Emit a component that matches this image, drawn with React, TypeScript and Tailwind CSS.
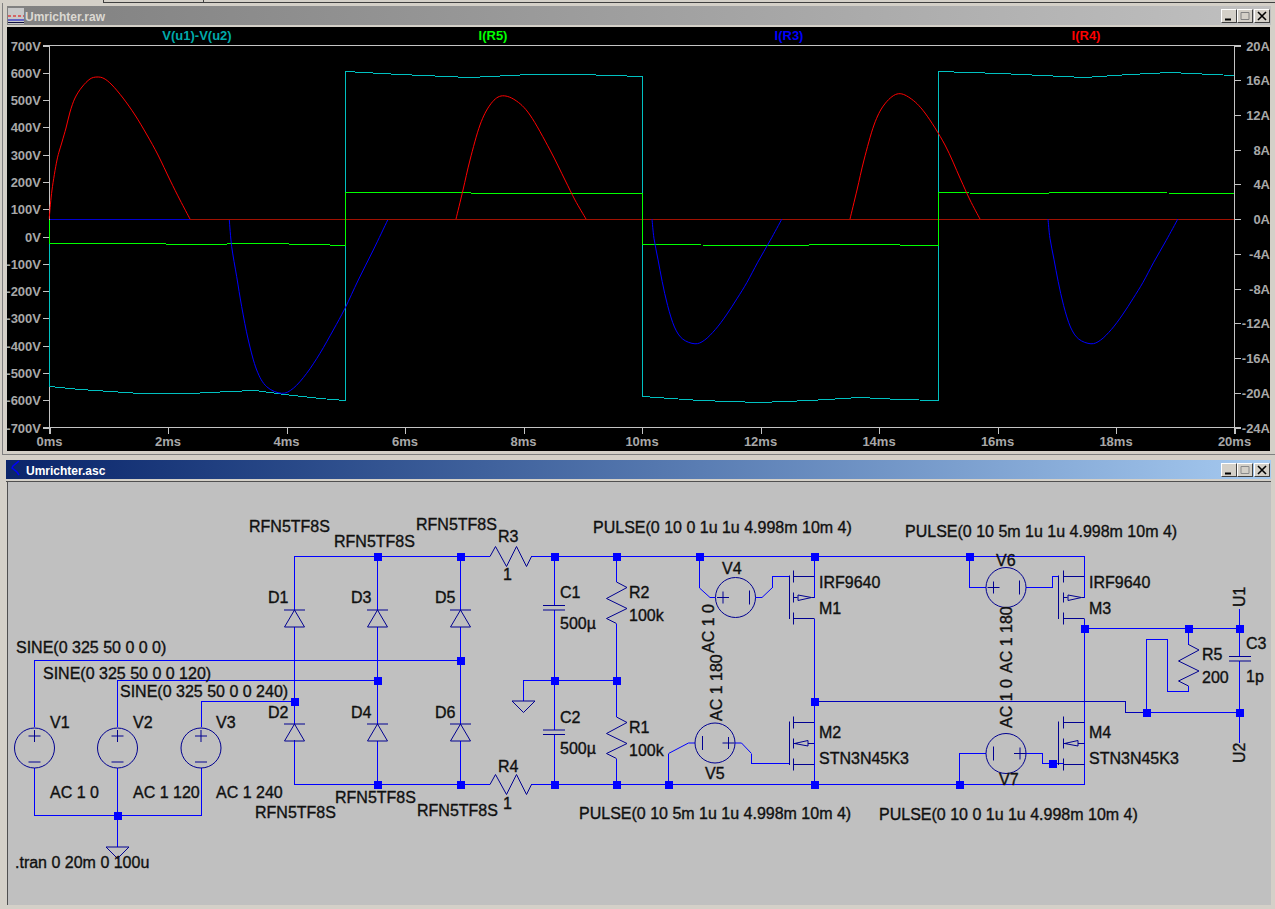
import React from "react";

type P = [number, number];

const F = "'Liberation Sans', Arial, sans-serif";
const WIRE = "#0000ff";
const SYM = "#000090";

function curve(pts: P[]): string {
  let d = `M${pts[0][0]} ${pts[0][1]}`;
  for (let i = 0; i < pts.length - 1; i++) {
    const p0 = pts[Math.max(0, i - 1)];
    const p1 = pts[i];
    const p2 = pts[i + 1];
    const p3 = pts[Math.min(pts.length - 1, i + 2)];
    const c1x = p1[0] + (p2[0] - p0[0]) / 6;
    const c1y = p1[1] + (p2[1] - p0[1]) / 6;
    const c2x = p2[0] - (p3[0] - p1[0]) / 6;
    const c2y = p2[1] - (p3[1] - p1[1]) / 6;
    d += ` C${c1x} ${c1y} ${c2x} ${c2y} ${p2[0]} ${p2[1]}`;
  }
  return d;
}

const leftLabels = ["700V", "600V", "500V", "400V", "300V", "200V", "100V", "0V", "-100V", "-200V", "-300V", "-400V", "-500V", "-600V", "-700V"];
const rightLabels = ["20A", "16A", "12A", "8A", "4A", "0A", "-4A", "-8A", "-12A", "-16A", "-20A", "-24A"];
const timeLabels = ["0ms", "2ms", "4ms", "6ms", "8ms", "10ms", "12ms", "14ms", "16ms", "18ms", "20ms"];

const teal: P[] = [
  [49.5, 243.5], [49.5, 386.5], [80, 389.5], [110, 391.5], [140, 393.5], [190, 393.5], [230, 391.5], [255, 390.5], [285, 394.5], [320, 398.5], [345.5, 400.5], [345.5, 71.5], [400, 74.5], [470, 77.5], [530, 74.5], [580, 74.5], [642.5, 76.5], [642.5, 396.5], [700, 400.5], [760, 402.5], [810, 400.5], [860, 397.5], [900, 399.5], [938.5, 400.5], [938.5, 71.5], [1000, 73.5], [1085, 77.5], [1130, 74.5], [1170, 72.5], [1234, 75.5],
];

const green: P[] = [
  [49.5, 219.5], [49.5, 243.5], [140, 243.5], [192, 244.5], [262, 243.5], [315, 244.5], [345.5, 245.5], [345.5, 192.5], [420, 192.5], [520, 193.5], [642.5, 193.5], [642.5, 244.5], [760, 245.5], [860, 244.5], [938.5, 245.5], [938.5, 192.5], [1000, 193.5], [1100, 192.5], [1234, 193.5],
];

const red: P[][] = [
  [[49.5, 219], [49.5, 215], [52, 190], [57, 160], [62, 142], [66, 128], [70, 112], [75, 98], [82, 87], [90, 79], [97, 77], [104, 78.5], [112, 85], [123, 98], [135, 115], [147, 135], [158, 155], [170, 180], [180, 200], [190, 219]],
  [[456, 219], [463, 190], [470, 160], [480, 125], [490, 105], [501, 96], [515, 100], [530, 115], [550, 150], [565, 180], [575, 200], [586, 219]],
  [[850, 219], [857, 190], [864, 160], [874, 125], [884, 105], [897, 94], [910, 98], [925, 113], [945, 145], [960, 178], [970, 200], [980, 219]],
];

const blueBase: P[] = [
  [229.3, 220], [231.7, 246.7], [236.7, 276.7], [241.7, 306.7], [248.3, 340], [256.7, 370], [266.7, 386.7], [281.7, 393.3], [293.3, 388.3], [306.7, 373.3], [320, 353.3], [333.3, 330], [345, 308.3], [358.3, 280], [373.3, 250], [387.7, 220],
];
const shrink = (x0: number): P[] => blueBase.map(([x, y]) => [x0 + (x - 229.3) * 0.82, 219 + (y - 220) * 0.72]);
const blue: P[][] = [blueBase, shrink(652), shrink(1048)];

function Plot() {
  const ax = "#c4c4c4";
  const tx = "#a8a8a8";
  const L = 49.5;
  const R = 1234.5;
  const T = 45.5;
  const B = 427.5;
  return (
    <svg viewBox="7 27 1263 424" className="block w-full h-full" style={{ fontFamily: F }}>
      <rect x="7" y="27" width="1263" height="424" fill="#000000" />
      <g stroke={ax} strokeWidth="1" shapeRendering="crispEdges" fill="none">
        <path d={`M43 ${T}H1241M43 ${B}H1241M${L} ${T}V434M${R} ${T}V434`} />
        {leftLabels.map((_, i) => (
          <path key={i} d={`M43 ${Math.round(T + (i * (B - T)) / 14) + 0.5}H${L}`} />
        ))}
        {rightLabels.map((_, i) => (
          <path key={i} d={`M${R} ${Math.round(T + (i * (B - T)) / 11) + 0.5}H1241`} />
        ))}
        {timeLabels.map((_, i) => (
          <path key={i} d={`M${Math.round(L + (i * (R - L)) / 10) + 0.5} ${B}V434`} />
        ))}
      </g>
      <g fontSize="13" fontWeight="700" fill={tx}>
        {leftLabels.map((t, i) => (
          <text key={t} x="41" y={T + (i * (B - T)) / 14 + 5} textAnchor="end">{t}</text>
        ))}
        {rightLabels.map((t, i) => (
          <text key={t} x="1270" y={T + (i * (B - T)) / 11 + 5} textAnchor="end">{t}</text>
        ))}
        {timeLabels.map((t, i) => (
          <text key={t} x={L + (i * (R - L)) / 10} y="446" textAnchor="middle">{t}</text>
        ))}
      </g>
      <g fontSize="13" fontWeight="700" textAnchor="middle">
        <text x="197" y="40" fill="#00aaaa">V(u1)-V(u2)</text>
        <text x="493" y="40" fill="#00ff00">I(R5)</text>
        <text x="789" y="40" fill="#0000ff">I(R3)</text>
        <text x="1086" y="40" fill="#ff0000">I(R4)</text>
      </g>
      <g fill="none" strokeWidth="1">
        <path d="M49.5 219.5H190" stroke="#0000d0" shapeRendering="crispEdges" />
        <path d="M190 219.5H1234" stroke="#a01000" shapeRendering="crispEdges" />
        <polyline points={teal.map((p) => p.join(",")).join(" ")} stroke="#00c0c0" shapeRendering="crispEdges" />
        <polyline points={green.map((p) => p.join(",")).join(" ")} stroke="#00ff00" shapeRendering="crispEdges" />
        {red.map((s, i) => (
          <path key={i} d={curve(s)} stroke="#ff0000" />
        ))}
        {blue.map((s, i) => (
          <path key={i} d={curve(s)} stroke="#0000ff" />
        ))}
      </g>
    </svg>
  );
}

const Wire = ({ d, dim }: { d: string; dim?: boolean }) => <path d={d} fill="none" stroke={dim ? "#0000b8" : WIRE} strokeWidth="1" shapeRendering="crispEdges" />;
const Diag = ({ d }: { d: string }) => <path d={d} fill="none" stroke={WIRE} strokeWidth="1" />;
const Sym = ({ d }: { d: string }) => <path d={d} fill="none" stroke={SYM} strokeWidth="1" />;
const Node = ({ x, y }: { x: number; y: number }) => <rect x={x - 3.5} y={y - 3.5} width="8" height="8" fill={WIRE} shapeRendering="crispEdges" />;
const T = ({ x, y, children, rot }: { x: number; y: number; children: React.ReactNode; rot?: boolean }) => (
  <text x={x} y={y} transform={rot ? `rotate(-90 ${x} ${y})` : undefined}>{children}</text>
);

const Diode = ({ x, y }: { x: number; y: number }) => <Sym d={`M${x - 10.5} ${y}H${x + 10.5}M${x} ${y}L${x + 10} ${y + 17}H${x - 10}Z`} />;

const Circle = ({ x, y }: { x: number; y: number }) => <circle cx={x} cy={y} r="20" fill="none" stroke={SYM} strokeWidth="1" />;

const Vert = ({ x, y }: { x: number; y: number }) => (
  <g>
    <Circle x={x} y={y} />
    <Sym d={`M${x - 6} ${y - 12}H${x + 6}M${x} ${y - 18}V${y - 6}M${x - 6} ${y + 14}H${x + 6}`} />
  </g>
);

const Horiz = ({ x, y, plus, bar }: { x: number; y: number; plus: number; bar: number }) => (
  <g>
    <Circle x={x} y={y} />
    <Sym d={`M${plus - 6} ${y}H${plus + 6}M${plus} ${y - 6}V${y + 6}M${bar} ${y - 7}V${y + 7}`} />
  </g>
);

const Res = ({ x, y }: { x: number; y: number }) => (
  <Sym d={`M${x} ${y}L${x + 10.5} ${y + 5.5}L${x - 10} ${y + 16.5}L${x + 10.5} ${y + 26.5}L${x - 10} ${y + 36.5}L${x} ${y + 41.5}`} />
);

const HRes = ({ x, y }: { x: number; y: number }) => (
  <Sym d={`M${x} ${y}L${x + 5.5} ${y - 10}L${x + 16.5} ${y + 10}L${x + 26.5} ${y - 10}L${x + 36.5} ${y + 10}L${x + 41.5} ${y}`} />
);

const Cap = ({ x, y }: { x: number; y: number }) => <Sym d={`M${x - 11} ${y}H${x + 11}M${x - 11} ${y + 4.5}H${x + 11}`} />;

const Gnd = ({ x, y }: { x: number; y: number }) => <Sym d={`M${x - 11.5} ${y}H${x + 11.5}L${x} ${y + 11.5}Z`} />;

const Fet = ({ gx, cx, dx, top, tip }: { gx: number; cx: number; dx: number; top: number; tip: "p" | "n" }) => {
  const y1 = top + 6;
  const y2 = top + 27;
  const y3 = top + 48;
  return (
    <g>
      <Sym d={`M${gx} ${top + 5}V${top + 48.5}M${cx} ${top}V${top + 12}M${cx} ${top + 22}V${top + 32}M${cx} ${top + 42}V${top + 54}M${cx} ${y1}H${dx}M${cx} ${y3}H${dx}M${cx} ${y2}H${cx + 4}`} />
      {tip === "p" ? (
        <Sym d={`M${cx + 4.5} ${y2 - 2.5}V${y2 + 3}L${cx + 18} ${y2}ZM${cx + 18} ${y2}H${dx}`} />
      ) : (
        <Sym d={`M${cx + 1} ${y2}L${cx + 14.5} ${y2 - 3}V${y2 + 2.5}ZM${cx + 14.5} ${y2}H${dx}`} />
      )}
    </g>
  );
};

function Schematic() {
  const nodes: P[] = [
    [377.5, 556.5], [460.5, 556.5], [554.5, 556.5], [616.5, 556.5], [699.5, 556.5], [814.5, 556.5], [969.5, 556.5],
    [460.5, 660.5], [377.5, 680.5], [294.5, 701.5], [554.5, 680.5], [616.5, 680.5],
    [377.5, 784.5], [460.5, 784.5], [554.5, 784.5], [616.5, 784.5], [668.5, 784.5], [814.5, 784.5], [959.5, 784.5],
    [814.5, 701.5], [1084.5, 628.5], [1188.5, 628.5], [1239.5, 628.5], [1146.5, 712.5], [1239.5, 712.5], [1052.5, 763.5], [117.5, 815.5],
  ];
  return (
    <svg viewBox="8 482 1263 423" className="block w-full h-full" style={{ fontFamily: F }}>
      <rect x="8" y="482" width="1263" height="423" fill="#c0c0c0" />
      {/* main rails */}
      <Wire d="M294.5 610V556.5H490M531 556.5H1084.5V576.5" />
      <Wire d="M294.5 740V784.5H490M531 784.5H1084.5V763.5" />
      {/* bridge */}
      <Wire d="M294.5 627V724M377.5 556.5V610M377.5 627V724M377.5 741V784.5M460.5 556.5V610M460.5 627V724M460.5 741V784.5" />
      <Wire d="M34.5 727V660.5H460.5M117.5 727V680.5H377.5M201.5 727V701.5H294.5" />
      <Wire d="M34.5 768V815.5H201.5V768M117.5 768V847" />
      <Diode x={294.5} y={610} />
      <Diode x={377.5} y={610} />
      <Diode x={460.5} y={610} />
      <Diode x={294.5} y={724} />
      <Diode x={377.5} y={724} />
      <Diode x={460.5} y={724} />
      <Vert x={34.5} y={748} />
      <Vert x={117.5} y={748} />
      <Vert x={201} y={748} />
      <Gnd x={117.5} y={847} />
      <HRes x={490} y={556.5} />
      <HRes x={490} y={784.5} />
      {/* caps + R1 R2 */}
      <Wire d="M554.5 556.5V605M554.5 610V730M554.5 735V784.5M523.5 701V680.5H616.5M616.5 556.5V582M616.5 624V717M616.5 759V784.5" />
      <Cap x={554} y={605.5} />
      <Cap x={554} y={730} />
      <Gnd x={523.5} y={701} />
      <Res x={616.5} y={582} />
      <Res x={616.5} y={717} />
      {/* V4 + M1 */}
      <Wire d="M699.5 556.5V588" />
      <Diag d="M699.5 588L710 597.5H715" />
      <Horiz x={735.5} y={597.5} plus={723} bar={749.5} />
      <Diag d="M755.5 597.5H762L772.5 587.5" />
      <Wire d="M772.5 587.5V576.5H789.5" />
      <Fet gx={789.5} cx={793.5} dx={814.5} top={570.5} tip="p" />
      <Wire d="M814.5 556.5V597.5M814.5 618.5V722" />
      {/* V5 + M2 */}
      <Wire d="M668.5 784.5V753.5" />
      <Diag d="M668.5 753.5L688.5 743H695" />
      <Horiz x={715} y={743} plus={728.5} bar={702.5} />
      <Diag d="M735 743H741.5L751.5 753.5" />
      <Wire d="M751.5 753.5V763.5H789.5" />
      <Fet gx={789.5} cx={793.5} dx={814.5} top={716.5} tip="n" />
      <Wire d="M814.5 722V763M814.5 763V784.5" />
      {/* V6 + M3 */}
      <Wire d="M969.5 556.5V587.5H986M1026 587.5H1052.5V576.5H1058.5" />
      <Horiz x={1006} y={587.5} plus={993.5} bar={1019.5} />
      <Fet gx={1058.5} cx={1063.5} dx={1084.5} top={570.5} tip="p" />
      <Wire d="M1084.5 556.5V597.5M1084.5 618.5V784.5" />
      {/* V7 + M4 */}
      <Wire d="M959.5 784.5V753.5H986M1026 753.5H1042.5V763.5H1063.5" />
      <Horiz x={1006} y={753.5} plus={1020} bar={993.5} />
      <Fet gx={1058.5} cx={1063.5} dx={1084.5} top={716.5} tip="n" />
      {/* output */}
      <Wire dim d="M814.5 701.5H1125.5V712.5H1146.5" />
      <Wire d="M1146.5 712.5H1239.5M1084.5 628.5H1239.5V656.5M1239.5 661V743M1239.5 628.5V609" />
      <Wire d="M1188.5 628.5V644.5M1188.5 686V691.5H1167.5V639.5H1146.5V712.5" />
      <Res x={1188.5} y={644.5} />
      <Cap x={1240} y={656.5} />
      {nodes.map(([x, y]) => (
        <Node key={`${x}-${y}`} x={x} y={y} />
      ))}
      <g fontSize="16" fill="#101010" stroke="#101010" strokeWidth="0.35">
        <T x={249} y={532}>RFN5TF8S</T>
        <T x={334} y={547}>RFN5TF8S</T>
        <T x={416} y={530}>RFN5TF8S</T>
        <T x={498} y={542}>R3</T>
        <T x={503} y={580}>1</T>
        <T x={268} y={603}>D1</T>
        <T x={351} y={603}>D3</T>
        <T x={435} y={603}>D5</T>
        <T x={268} y={718}>D2</T>
        <T x={351} y={718}>D4</T>
        <T x={435} y={718}>D6</T>
        <T x={498} y={772}>R4</T>
        <T x={503} y={809}>1</T>
        <T x={335} y={803}>RFN5TF8S</T>
        <T x={417} y={816}>RFN5TF8S</T>
        <T x={255} y={818}>RFN5TF8S</T>
        <T x={16} y={653}>SINE(0 325 50 0 0 0)</T>
        <T x={43} y={679}>SINE(0 325 50 0 0 120)</T>
        <T x={120} y={697}>SINE(0 325 50 0 0 240)</T>
        <T x={50} y={728}>V1</T>
        <T x={133} y={728}>V2</T>
        <T x={216} y={728}>V3</T>
        <T x={50} y={798}>AC 1 0</T>
        <T x={133} y={798}>AC 1 120</T>
        <T x={216} y={798}>AC 1 240</T>
        <T x={15} y={868}>.tran 0 20m 0 100u</T>
        <T x={593} y={533}>PULSE(0 10 0 1u 1u 4.998m 10m 4)</T>
        <T x={905} y={537}>PULSE(0 10 5m 1u 1u 4.998m 10m 4)</T>
        <T x={579} y={819}>PULSE(0 10 5m 1u 1u 4.998m 10m 4)</T>
        <T x={879} y={820}>PULSE(0 10 0 1u 1u 4.998m 10m 4)</T>
        <T x={560} y={598}>C1</T>
        <T x={560} y={629}>500µ</T>
        <T x={560} y={723}>C2</T>
        <T x={560} y={754}>500µ</T>
        <T x={629} y={598}>R2</T>
        <T x={629} y={621}>100k</T>
        <T x={629} y={733}>R1</T>
        <T x={629} y={756}>100k</T>
        <T x={722} y={574}>V4</T>
        <T x={705} y={779}>V5</T>
        <T x={996} y={566}>V6</T>
        <T x={999} y={785}>V7</T>
        <T x={819} y={588}>IRF9640</T>
        <T x={819} y={614}>M1</T>
        <T x={819} y={738}>M2</T>
        <T x={819} y={764}>STN3N45K3</T>
        <T x={1089} y={588}>IRF9640</T>
        <T x={1089} y={614}>M3</T>
        <T x={1089} y={738}>M4</T>
        <T x={1089} y={764}>STN3N45K3</T>
        <T x={1202} y={660}>R5</T>
        <T x={1202} y={683}>200</T>
        <T x={1246} y={649}>C3</T>
        <T x={1246} y={682}>1p</T>
        <T x={714} y={653} rot>AC 1 0</T>
        <T x={722} y={721} rot>AC 1 180</T>
        <T x={1012} y={673} rot>AC 1 180</T>
        <T x={1012} y={728} rot>AC 1 0</T>
        <T x={1245} y={607} rot>U1</T>
        <T x={1245} y={763} rot>U2</T>
      </g>
    </svg>
  );
}

function WinButtons({ faded }: { faded?: boolean }) {
  const btn = "w-4 h-[14px] bg-[#d4d0c8] border-t border-l border-t-white border-l-white border-r border-b border-r-[#404040] border-b-[#404040] flex items-center justify-center";
  return (
    <div className="flex items-center pr-[1px]">
      <div className={btn}>
        <svg width="10" height="10" viewBox="0 0 10 10"><path d="M1 8.5H7" stroke="#000" strokeWidth="2" /></svg>
      </div>
      <div className={`${btn} mr-[1px]`}>
        <svg width="10" height="10" viewBox="0 0 10 10"><path d="M1 1.5H9V8.5H1Z" fill="none" stroke={faded ? "#808080" : "#8a8a8a"} strokeWidth="1" /></svg>
      </div>
      <div className={btn}>
        <svg width="10" height="10" viewBox="0 0 10 10"><path d="M1 1L9 9M9 1L1 9" stroke="#000" strokeWidth="1.6" /></svg>
      </div>
    </div>
  );
}

export default function App() {
  return (
    <div className="w-[1275px] h-[909px] bg-[#d4d0c8] overflow-hidden flex flex-col">
      <div className="h-[3px] flex shrink-0">
        <div className="w-[103px]" />
        <div className="w-[100px] border-l border-b border-[#404040]" />
        <div className="flex-1 border-l border-b border-[#404040]" />
      </div>
      <section className="h-[452px] shrink-0 flex flex-col ml-[2px] pl-[4px] pr-[4px] pt-[3px] border-l border-b border-[#808080]">
        <div className="h-[19px] shrink-0 flex items-center bg-gradient-to-r from-[#808080] to-[#c0c0c0]">
          <svg width="16" height="16" viewBox="0 0 16 16" className="ml-[1px] shrink-0">
            <rect width="16" height="16" fill="#c8c8c8" />
            <path d="M0 8H16" stroke="#e00000" strokeDasharray="3 2" />
            <path d="M0 12H16" stroke="#0000c0" />
            <path d="M0 14.5H16" stroke="#101040" />
          </svg>
          <span className="ml-[1px] mt-[2px] flex-1 text-[12px] font-bold leading-none text-[#dcd9d2] font-['Liberation_Sans',sans-serif]">Umrichter.raw</span>
          <WinButtons faded />
        </div>
        <div className="h-[2px] shrink-0" />
        <div className="h-[424px] shrink-0 mr-[1px]">
          <Plot />
        </div>
      </section>
      <section className="flex-1 flex flex-col ml-[6px] pr-[4px] pt-[5px]">
        <div className="h-[19px] shrink-0 flex items-center bg-gradient-to-r from-[#0a246a] to-[#a6caf0]">
          <svg width="16" height="16" viewBox="0 0 16 16" className="ml-[4px] shrink-0 -mt-[3px]">
            <path d="M9 1L3 6L2 8L7 12L9 15" fill="none" stroke="#0000ff" strokeWidth="1.4" />
          </svg>
          <span className="mt-[2px] flex-1 text-[12px] font-bold leading-none text-white font-['Liberation_Sans',sans-serif]">Umrichter.asc</span>
          <WinButtons />
        </div>
        <div className="h-[3px] shrink-0 border-b border-[#505050]" />
        <div className="h-[423px] shrink-0 ml-[1px] border-l border-[#505050]">
          <Schematic />
        </div>
      </section>
    </div>
  );
}
